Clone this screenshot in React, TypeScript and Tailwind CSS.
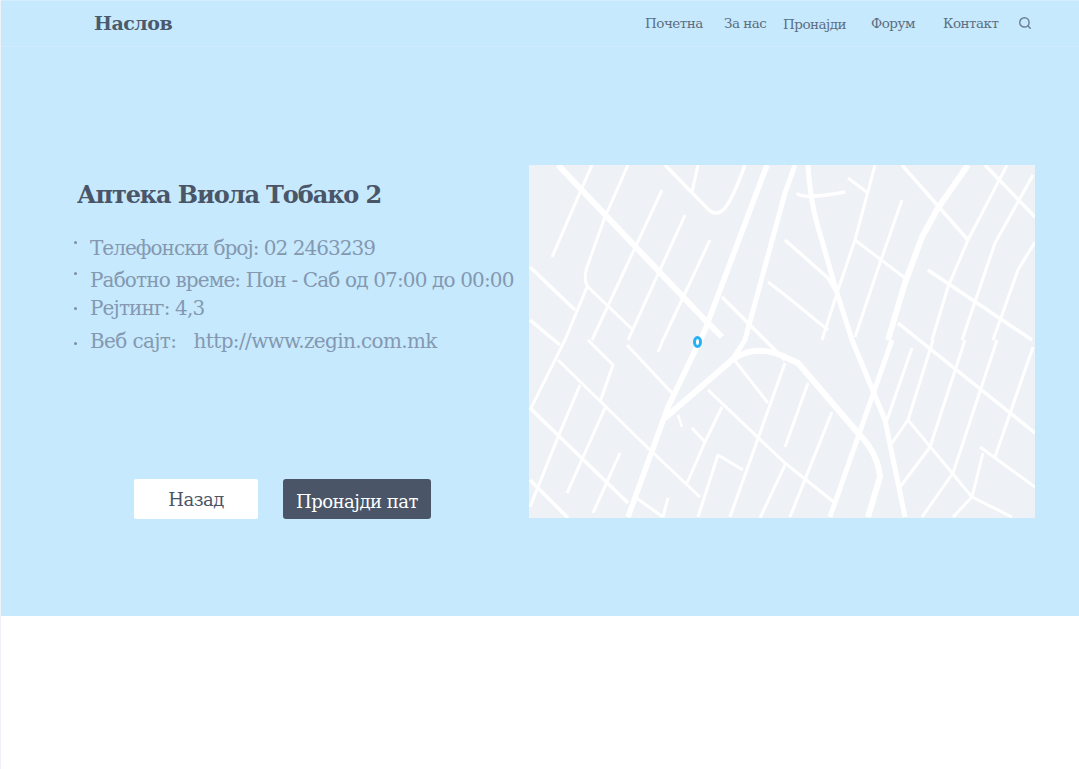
import React from 'react';
import { Search } from 'lucide-react';

const slab = { fontFamily: '"DejaVu Serif", "Liberation Serif", serif' };

const navLinks = [
  { label: 'Почетна', className: 'w-[58px] mr-[21px]' },
  { label: 'За нас', className: 'w-[43px] mr-[16px]' },
  { label: 'Пронајди', className: 'w-[64px] mr-[24px] translate-y-px' },
  { label: 'Форум', className: 'w-[46px] mr-[26px]' },
  { label: 'Контакт', className: 'w-[57px] mr-[18px]' },
];

// street layout, in page pixels of the reference
const roads: { d: string; w: number }[] = [
  { d: 'M558 165L705 320L722 337', w: 6 },
  { d: 'M592 165L552 257', w: 3 },
  { d: 'M628 165L605 217L587 267Q583 280 588 287L633 330', w: 3 },
  { d: 'M662 190L592 340', w: 3 },
  { d: 'M685 215L628 340', w: 3 },
  { d: 'M710 240L663 340L658 352', w: 3 },
  { d: 'M665 165L707 208Q716 218 725 208Q733 198 745 165', w: 3.5 },
  { d: 'M698 165L692 192', w: 3 },
  { d: 'M767 165L705 330L668 407L628 517', w: 5.5 },
  { d: 'M795 165L785 193L745 340L732 360', w: 5 },
  { d: 'M722 297L765 340L785 360', w: 3.5 },
  { d: 'M768 282L785 295L828 330', w: 3 },
  { d: 'M530 267L575 310', w: 3.5 },
  { d: 'M587 287L565 340L530 410', w: 3 },
  { d: 'M530 320L560 345', w: 3.5 },
  { d: 'M558 360L648 448L700 497', w: 3 },
  { d: 'M588 340L613 365L600 402', w: 3 },
  { d: 'M627 345L672 393', w: 3 },
  { d: 'M732 357L768 403', w: 3 },
  { d: 'M530 408L628 503', w: 3.5 },
  { d: 'M635 497L663 517', w: 3 },
  { d: 'M580 385L558 437L530 507', w: 3 },
  { d: 'M605 408L567 493', w: 3 },
  { d: 'M620 453L593 513', w: 3 },
  { d: 'M530 480L568 518', w: 3.5 },
  { d: 'M665 418L732 360Q755 343 785 357L798 363L858 433Q878 453 880 477L868 517', w: 6 },
  { d: 'M678 415L682 427', w: 2.5 },
  { d: 'M692 428L705 442L687 483', w: 3 },
  { d: 'M722 407L705 442', w: 3 },
  { d: 'M708 390L785 463L835 503', w: 3 },
  { d: 'M785 363L730 517', w: 3 },
  { d: 'M743 470L718 455L698 517', w: 3 },
  { d: 'M668 498L663 517', w: 3 },
  { d: 'M785 465L760 518', w: 3 },
  { d: 'M808 383L785 447', w: 3 },
  { d: 'M832 412L790 517', w: 3 },
  { d: 'M875 165L855 240L837 293L822 340', w: 3 },
  { d: 'M892 340L830 517', w: 5 },
  { d: 'M808 165Q810 200 818 227L837 293L852 340L885 420L905 517', w: 5 },
  { d: 'M912 348L887 420', w: 3 },
  { d: 'M933 340L908 420L892 443', w: 3 },
  { d: 'M908 420L972 497L1012 517', w: 3 },
  { d: 'M930 447L900 487', w: 3 },
  { d: 'M898 323L1035 433', w: 3.5 },
  { d: 'M965 340L930 447', w: 3 },
  { d: 'M997 340L953 473L922 517', w: 3 },
  { d: 'M1033 347L995 457', w: 3 },
  { d: 'M980 447L1035 487', w: 3 },
  { d: 'M983 453L972 497L953 517', w: 3 },
  { d: 'M785 240L828 278L837 293', w: 3.5 },
  { d: 'M848 178L868 193', w: 3 },
  { d: 'M797 193Q802 200 845 192', w: 3.5 },
  { d: 'M902 200L880 263L855 337', w: 3 },
  { d: 'M855 240L905 278', w: 3 },
  { d: 'M968 165L938 208L922 237L905 283L888 340', w: 6 },
  { d: 'M902 165L968 240', w: 3.5 },
  { d: 'M985 165L1035 217', w: 3.5 },
  { d: 'M1007 165L968 240L948 287L932 340', w: 3 },
  { d: 'M1033 175L995 243L962 340', w: 3 },
  { d: 'M1035 242L1018 270L993 340', w: 3 },
  { d: 'M928 270L1032 340', w: 3.5 },
];

const details = [
  { text: 'Телефонски број: 02 2463239', rowClass: 'h-[32px] tracking-[-0.97px]', dotClass: 'mt-[8px]' },
  { text: 'Работно време: Пон - Саб од 07:00 до 00:00', rowClass: 'h-[28px] tracking-[-0.86px]', dotClass: 'mt-[7px]' },
  { text: 'Рејтинг: 4,3', rowClass: 'h-[33px] tracking-[-0.86px]', dotClass: 'mt-[14px]' },
  { text: 'Веб сајт:   http://www.zegin.com.mk', rowClass: 'h-[32px] tracking-[-0.63px]', dotClass: 'mt-[16px]' },
];

export default function App() {
  return (
    <div className="min-h-[769px] bg-white border-l border-[#eef2f6]" style={slab}>
      <div className="bg-[#c6e9fe] h-[616px] border-t border-[#d3eefe]">
        <nav className="h-[46px] flex items-center border-b border-[#cfecfe] pl-[93px] pr-[47px]">
          <a className="text-[#4a5a6c] text-[19px] font-bold tracking-[-0.5px]">Наслов</a>
          <div className="ml-auto flex items-center text-[#5d6e80] text-[13.5px] tracking-[-0.5px] whitespace-nowrap">
            {navLinks.map(link => (
              <a key={link.label} className={link.className}>{link.label}</a>
            ))}
            <Search className="h-[14px] w-[14px] text-[#6b7f93] -translate-y-px" strokeWidth={2.5} />
          </div>
        </nav>

        <div className="flex pt-[118px] pl-[72px]">
          <div className="w-[456px] h-[354px] flex flex-col">
            <h1 className="pl-[4px] pt-[14px] text-[#4a5568] text-[24px] font-bold leading-[32px] tracking-[-1.1px] whitespace-nowrap">
              Аптека Виола Тобако 2
            </h1>
            <ul className="mt-[22px] text-[#8498b0] text-[20px] leading-[30px] whitespace-pre">
              {details.map(item => (
                <li key={item.text} className={`flex ${item.rowClass}`}>
                  <span className={`h-[3px] w-[3px] rounded-full bg-[#7b8ea6] ml-[1px] mr-[13px] shrink-0 ${item.dotClass}`} />
                  {item.text}
                </li>
              ))}
            </ul>
            <div className="mt-auto flex gap-[25px] pl-[61px] text-[18px] tracking-[-0.5px]">
              <button className="w-[124px] h-[40px] bg-white text-[#4a5568] rounded-[2px]">Назад</button>
              <button className="w-[148px] h-[40px] bg-[#4a5568] text-white rounded-[3px] pt-[4px]">Пронајди пат</button>
            </div>
          </div>

          <div className="w-[506px] h-[353px] bg-[#eef1f6] overflow-hidden">
            <svg viewBox="529 165 506 353" className="block w-full h-full" fill="none" stroke="#ffffff" strokeLinejoin="round">
              {roads.map(r => (
                <path key={r.d} d={r.d} strokeWidth={r.w} />
              ))}
              <ellipse cx="697.5" cy="342" rx="3" ry="4.5" stroke="#27b0f5" strokeWidth="3" />
            </svg>
          </div>
        </div>
      </div>
    </div>
  );
}
